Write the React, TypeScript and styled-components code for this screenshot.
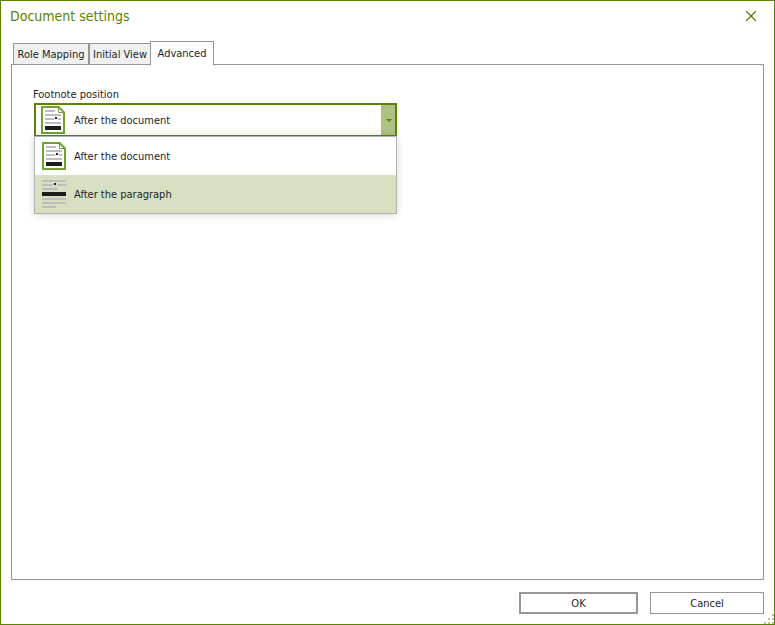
import React, { useState } from "react";
import styled, { createGlobalStyle, css } from "styled-components";

const GREEN = "#5b8300";
const GREY = "#969696";

const GlobalStyle = createGlobalStyle`
  *, *::before, *::after { box-sizing: border-box; }
  body {
    margin: 0;
    background: #fff;
    color: #1e1e28;
    font: 11px/16px "DejaVu Sans Condensed", Tahoma, sans-serif;
  }
  button, select { font: inherit; color: inherit; }
`;

const Dialog = styled.form`
  position: relative;
  display: flex;
  flex-direction: column;
  min-height: 100vh;
  padding: 0 10px 10px;
  border: 1px solid ${GREEN};
  background: #fff;
`;

const TitleBar = styled.header`
  display: flex;
  align-items: center;
  justify-content: space-between;
  height: 30px;
  margin-bottom: 10px;
`;

const Title = styled.h1`
  margin: 0 0 0 -1px;
  color: ${GREEN};
  font-size: 14px;
  line-height: 20px;
  font-weight: 400;
`;

const CloseButton = styled.button`
  display: flex;
  align-items: center;
  justify-content: center;
  width: 26px;
  height: 26px;
  padding: 0;
  border: 0;
  background: transparent;
  color: ${GREEN};
`;

const TabList = styled.div`
  display: flex;
  align-items: flex-end;
  height: 24px;
  padding-left: 2px;
`;

const Tab = styled.button<{ $active: boolean; $width: number }>`
  width: ${(p) => p.$width}px;
  height: 22px;
  padding: 2px 0 0;
  border: 1px solid ${GREY};
  background: #f0f0f0;
  white-space: nowrap;
  ${(p) =>
    p.$active &&
    css`
      z-index: 1;
      height: 25px;
      margin: 0 -1px -1px;
      padding: 0;
      border-bottom-color: #fff;
      background: #fff;
    `}
`;

const Panel = styled.section`
  flex: 1;
  margin-top: -1px;
  padding: 22px 21px;
  border: 1px solid ${GREY};
`;

const Field = styled.div`
  display: flex;
  flex-direction: column;
  max-width: 364px;
`;

const FieldLabel = styled.label``;

const Combo = styled.div`
  position: relative;
  margin-left: 1px;
`;

const ComboBox = styled.div`
  display: grid;
  grid-template-columns: 33px 1fr 14px;
  height: 33px;
  border: 2px solid ${GREEN};
  border-bottom-width: 1px;
  background: #fff;
`;

const ComboIcon = styled.span`
  display: flex;
  align-items: center;
  padding-left: 5px;
  grid-area: 1 / 1;
  pointer-events: none;
`;

const ComboSelect = styled.select`
  grid-area: 1 / 1 / 2 / 4;
  width: 100%;
  padding: 2px 14px 0 38px;
  border: 0;
  outline: 0;
  appearance: none;
  background: transparent;
`;

const ComboArrow = styled.span`
  display: flex;
  align-items: center;
  justify-content: center;
  padding-left: 2px;
  grid-area: 1 / 3;
  background: #adc180;
  pointer-events: none;
`;

const Options = styled.ul`
  position: absolute;
  top: 100%;
  left: 0;
  right: 0;
  margin: 0;
  padding: 0;
  border: 1px solid #b2b2b2;
  background: #fff;
  box-shadow: 0 1px 8px rgba(0, 0, 0, 0.16);
  list-style: none;
`;

const Option = styled.li<{ $highlighted: boolean }>`
  display: flex;
  align-items: center;
  gap: 8px;
  height: 38px;
  padding-left: 7px;
  background: ${(p) => (p.$highlighted ? "#d7e0c1" : "#fff")};
`;

const OptionText = styled.span`
  padding-top: 2px;
`;

const Footer = styled.footer`
  display: flex;
  justify-content: flex-end;
  gap: 12px;
  margin-top: 12px;
`;

const PushButton = styled.button<{ $primary?: boolean }>`
  width: ${(p) => (p.$primary ? 119 : 114)}px;
  height: 22px;
  padding: 2px 0 0;
  border: ${(p) => (p.$primary ? 2 : 1)}px solid ${GREY};
  background: #fff;
`;

const Grip = styled.svg`
  position: absolute;
  right: 0;
  bottom: 0;
`;

function DocumentEndIcon() {
  return (
    <svg width="24" height="28" viewBox="0 0 24 28" aria-hidden="true">
      <path d="M1 1H17.6L23 6.4V27H1Z" fill="#fff" stroke="#6fa22f" strokeWidth="2" />
      <path d="M17.5 2V6.5H22" fill="none" stroke="#6fa22f" strokeWidth="1" />
      <path d="M4 4H14V6H4ZM4 8H20V10H4ZM4 12H20V14H4ZM4 16H20V18H4Z" fill="#bdbdbd" />
      <path d="M13 11H17V14H13Z" fill="#fff" />
      <path d="M14 11H16V13H14ZM4 20H20V24H4Z" fill="#1d1d1b" />
    </svg>
  );
}

function ParagraphEndIcon() {
  return (
    <svg width="24" height="28" viewBox="0 0 24 28" aria-hidden="true">
      <path
        d="M0 0H24V2H0ZM0 4H11V6H0ZM15 4H24V6H15ZM0 8H16V10H0ZM0 18H24V20H0ZM0 22H24V24H0ZM0 26H14V28H0Z"
        fill="#bdbdbd"
      />
      <path d="M12 3H14V5H12ZM0 12H24V16H0Z" fill="#1d1d1b" />
    </svg>
  );
}

const TABS = [
  { name: "Role Mapping", width: 76 },
  { name: "Initial View", width: 62 },
  { name: "Advanced", width: 64 },
];

const POSITIONS = [
  { value: "document", text: "After the document", Icon: DocumentEndIcon },
  { value: "paragraph", text: "After the paragraph", Icon: ParagraphEndIcon },
];

function FootnotePosition() {
  const [value, setValue] = useState("document");
  const [hovered, setHovered] = useState("paragraph");
  const [open, setOpen] = useState(true);
  const current = POSITIONS.find((p) => p.value === value) ?? POSITIONS[0];

  return (
    <Field>
      <FieldLabel htmlFor="footnote-position">Footnote position</FieldLabel>
      <Combo>
        <ComboBox>
          <ComboSelect
            id="footnote-position"
            value={value}
            onChange={(e) => setValue(e.target.value)}
            onMouseDown={(e) => {
              e.preventDefault();
              setOpen(!open);
            }}
          >
            {POSITIONS.map((p) => (
              <option key={p.value} value={p.value}>
                {p.text}
              </option>
            ))}
          </ComboSelect>
          <ComboIcon>
            <current.Icon />
          </ComboIcon>
          <ComboArrow>
            <svg width="6" height="3" viewBox="0 0 6 3" aria-hidden="true">
              <path d="M0 0H6L3 3Z" fill={GREEN} />
            </svg>
          </ComboArrow>
        </ComboBox>
        {open && (
          <Options role="listbox" aria-label="Footnote position">
            {POSITIONS.map(({ value: v, text, Icon }) => (
              <Option
                key={v}
                role="option"
                aria-selected={v === value}
                $highlighted={v === hovered}
                onMouseEnter={() => setHovered(v)}
                onClick={() => {
                  setValue(v);
                  setOpen(false);
                }}
              >
                <Icon />
                <OptionText>{text}</OptionText>
              </Option>
            ))}
          </Options>
        )}
      </Combo>
    </Field>
  );
}

export default function App() {
  const [tab, setTab] = useState("Advanced");

  return (
    <>
      <GlobalStyle />
      <Dialog onSubmit={(e) => e.preventDefault()}>
        <TitleBar>
          <Title>Document settings</Title>
          <CloseButton type="button" aria-label="Close">
            <svg width="10" height="10" viewBox="0 0 10 10" aria-hidden="true">
              <path d="M0 0L10 10M10 0L0 10" stroke="currentColor" strokeWidth="1.3" />
            </svg>
          </CloseButton>
        </TitleBar>
        <TabList role="tablist">
          {TABS.map((t) => (
            <Tab
              key={t.name}
              type="button"
              role="tab"
              aria-selected={t.name === tab}
              $active={t.name === tab}
              $width={t.width}
              onClick={() => setTab(t.name)}
            >
              {t.name}
            </Tab>
          ))}
        </TabList>
        <Panel role="tabpanel" aria-label={tab}>
          {tab === "Advanced" && <FootnotePosition />}
        </Panel>
        <Footer>
          <PushButton type="submit" $primary>
            OK
          </PushButton>
          <PushButton type="button">Cancel</PushButton>
        </Footer>
        <Grip width="10" height="10" viewBox="0 0 10 10" aria-hidden="true">
          <path d="M8 0H10V2H8ZM4 4H6V6H4ZM8 4H10V6H8ZM0 8H2V10H0ZM4 8H6V10H4ZM8 8H10V10H8Z" fill="#b4c68c" />
        </Grip>
      </Dialog>
    </>
  );
}
